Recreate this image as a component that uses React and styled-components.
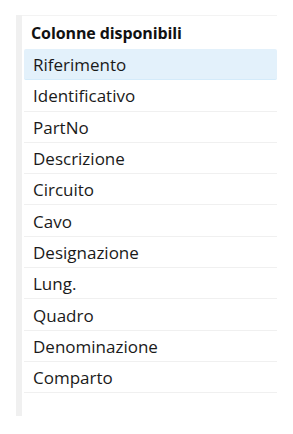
import React from "react";
import styled, { createGlobalStyle } from "styled-components";

const Global = createGlobalStyle`
  html, body { margin: 0; padding: 0; background: #ffffff; }
  body { font-family: "Open Sans", "Noto Sans", sans-serif; }
`;

const Page = styled.div`
  padding: 15px 0 0 16px;
`;

const Panel = styled.div`
  width: 261px;
  height: 401px;
  display: flex;
  border-left: 6px solid #f0f0f0;
  box-sizing: border-box;
`;

const List = styled.div`
  flex: 1;
  display: flex;
  flex-direction: column;
  border-top: 1px solid #f3f3f3;
`;

const Header = styled.div`
  height: 33px;
  display: flex;
  align-items: center;
  padding-left: 9px;
  font-weight: 700;
  font-size: 16px;
  color: #111;
  letter-spacing: -0.1px;
`;

const Row = styled.div`
  height: 31.3px;
  box-sizing: border-box;
  margin-left: 2px;
  display: flex;
  align-items: center;
  padding-left: 9px;
  padding-top: 1px;
  font-size: 17px;
  color: #1a1a1a;
  border-bottom: 1px solid ${(p) => (p.$selected ? "#d4ebfa" : "#f0f0f0")};
  background: ${(p) => (p.$selected ? "#e3f1fb" : "transparent")};
  border-radius: ${(p) => (p.$selected ? "2px" : "0")};
`;

const items = [
  "Riferimento",
  "Identificativo",
  "PartNo",
  "Descrizione",
  "Circuito",
  "Cavo",
  "Designazione",
  "Lung.",
  "Quadro",
  "Denominazione",
  "Comparto",
];

export default function App() {
  return (
    <>
      <Global />
      <Page>
        <Panel>
          <List>
            <Header>Colonne disponibili</Header>
            {items.map((t, i) => (
              <Row key={t} $selected={i === 0}>
                {t}
              </Row>
            ))}
          </List>
        </Panel>
      </Page>
    </>
  );
}
